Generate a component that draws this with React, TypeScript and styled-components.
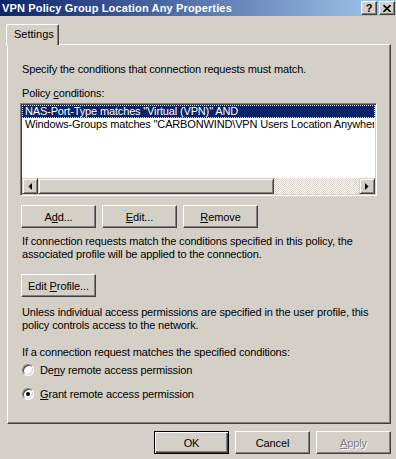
import React from "react";
import styled, { createGlobalStyle } from "styled-components";

const Global = createGlobalStyle`
  html, body { margin: 0; padding: 0; background: #d4d0c8; }
  body {
    font-family: "Liberation Sans", Arial, sans-serif;
    font-size: 11px;
    color: #000;
  }
`;

const Window = styled.div`
  width: 396px;
  height: 459px;
  background: #d4d0c8;
  display: flex;
  flex-direction: column;
  overflow: hidden;
`;

const TitleBar = styled.div`
  height: 16px;
  flex: none;
  display: flex;
  align-items: center;
  padding: 0 1px 0 2px;
  background: linear-gradient(to right, #0a246a, #a6caf0);
`;

const Title = styled.div`
  flex: 1;
  color: #fff;
  font-weight: bold;
  font-size: 11px;
  line-height: 16px;
  letter-spacing: 0.15px;
  white-space: nowrap;
`;

const CaptionButton = styled.div<{ $gap?: number }>`
  width: 16px;
  height: 14px;
  box-sizing: border-box;
  background: #d4d0c8;
  border: 1px solid;
  border-color: #fff #404040 #404040 #fff;
  box-shadow: inset -1px -1px #808080;
  display: flex;
  align-items: center;
  justify-content: center;
  margin-left: ${(p) => p.$gap ?? 0}px;
  font-weight: bold;
  font-size: 11px;
  line-height: 12px;
`;

const Body = styled.div`
  flex: 1;
  display: flex;
  flex-direction: column;
  padding: 8px 5px 0 7px;
`;

const TabStrip = styled.div`
  display: flex;
  height: 20px;
`;

const Tab = styled.div`
  position: relative;
  z-index: 1;
  margin-left: -1px;
  margin-bottom: -1px;
  width: 53px;
  height: 21px;
  box-sizing: border-box;
  background: #d4d0c8;
  border-top: 1px solid #fff;
  border-left: 1px solid #fff;
  border-right: 1px solid #404040;
  border-radius: 2px 2px 0 0;
  box-shadow: inset -1px 0 #808080;
  padding: 3px 0 0 7px;
  line-height: 13px;
`;

const Panel = styled.div`
  height: 380px;
  box-sizing: border-box;
  border: 1px solid;
  border-color: #fff #404040 #404040 #fff;
  box-shadow: inset -1px -1px #808080;
  padding: 0 13px 0 14px;
  display: flex;
  flex-direction: column;
`;

const Para = styled.div<{ $top: number }>`
  margin-top: ${(p) => p.$top}px;
  line-height: 13px;
  letter-spacing: -0.15px;
  white-space: nowrap;
`;

const U = styled.span`
  text-decoration: underline;
  text-underline-offset: 1px;
`;

const Label = styled.span`
  white-space: pre;
`;

const ListBox = styled.div`
  margin-top: 3px;
  margin-left: -2px;
  width: 357px;
  height: 93px;
  box-sizing: border-box;
  border: 1px solid;
  border-color: #808080 #fff #fff #808080;
  box-shadow: inset 1px 1px #404040, inset -1px -1px #d4d0c8;
  background: #fff;
  padding: 1px;
  display: flex;
  flex-direction: column;
  overflow: hidden;
`;

const Rows = styled.div`
  flex: 1;
  overflow: hidden;
`;

const Row = styled.div<{ $selected?: boolean }>`
  height: 13px;
  box-sizing: border-box;
  line-height: 11px;
  padding: 0 2px;
  white-space: nowrap;
  overflow: hidden;
  letter-spacing: -0.15px;
  border: 1px ${(p) => (p.$selected ? "dotted #f0e4a0" : "solid transparent")};
  background: ${(p) => (p.$selected ? "#0a246a" : "transparent")};
  color: ${(p) => (p.$selected ? "#fff" : "#000")};
`;

const ScrollBar = styled.div`
  height: 16px;
  flex: none;
  display: flex;
`;

const Raised = styled.div`
  box-sizing: border-box;
  background: #d4d0c8;
  border: 1px solid;
  border-color: #d4d0c8 #404040 #404040 #d4d0c8;
  box-shadow: inset 1px 1px #fff, inset -1px -1px #808080;
`;

const ScrollArrow = styled(Raised)`
  width: 16px;
  height: 16px;
  display: flex;
  align-items: center;
  justify-content: center;
`;

const Thumb = styled(Raised)`
  width: 236px;
  height: 16px;
`;

const Track = styled.div`
  flex: 1;
  background-color: #d4d0c8;
  background-image: conic-gradient(#fff 25%, #d4d0c8 0 50%, #fff 0 75%, #d4d0c8 0);
  background-size: 2px 2px;
`;

const ButtonRow = styled.div<{ $top: number }>`
  display: flex;
  gap: 6px;
  margin-top: ${(p) => p.$top}px;
  margin-left: -1px;
`;

const Button = styled.div<{ $default?: boolean; $disabled?: boolean }>`
  width: 75px;
  height: 23px;
  box-sizing: border-box;
  display: flex;
  align-items: center;
  justify-content: center;
  background: #d4d0c8;
  border: 1px solid;
  border-color: ${(p) => (p.$default ? "#000" : "#fff #404040 #404040 #fff")};
  box-shadow: ${(p) =>
    p.$default
      ? "inset 1px 1px #fff, inset -1px -1px #404040, inset -2px -2px #808080"
      : "inset -1px -1px #808080"};
  color: ${(p) => (p.$disabled ? "#808080" : "#000")};
  text-shadow: ${(p) => (p.$disabled ? "1px 1px #fff" : "none")};
  letter-spacing: -0.1px;
  white-space: nowrap;
`;

const Footer = styled.div`
  display: flex;
  justify-content: flex-end;
  gap: 6px;
  margin-top: 7px;
`;

const RadioRow = styled.div<{ $top: number }>`
  display: flex;
  align-items: center;
  height: 13px;
  margin-top: ${(p) => p.$top}px;
  letter-spacing: -0.15px;
  white-space: nowrap;
`;

const RadioCircle = styled.span<{ $checked?: boolean }>`
  width: 12px;
  height: 12px;
  box-sizing: border-box;
  border-radius: 50%;
  border: 1px solid;
  border-color: #808080 #fff #fff #808080;
  box-shadow: inset 1px 1px #404040, inset -1px -1px #d4d0c8;
  background: #fff;
  margin-right: 6px;
  display: flex;
  align-items: center;
  justify-content: center;
  &::after {
    content: "";
    width: 4px;
    height: 4px;
    border-radius: 50%;
    background: ${(p) => (p.$checked ? "#000" : "transparent")};
  }
`;

const Arrow = ({ dir }: { dir: "left" | "right" }) => (
  <svg width="4" height="7" viewBox="0 0 4 7">
    {dir === "left" ? (
      <polygon points="4,0 4,7 0.5,3.5" fill="#000" />
    ) : (
      <polygon points="0,0 0,7 3.5,3.5" fill="#000" />
    )}
  </svg>
);

const CloseGlyph = () => (
  <svg width="8" height="7" viewBox="0 0 8 7">
    <path d="M0.5 0 L7.5 7 M7.5 0 L0.5 7" stroke="#000" strokeWidth="1.6" />
  </svg>
);

export default function App() {
  return (
    <>
      <Global />
      <Window>
        <TitleBar>
          <Title>VPN Policy Group Location Any Properties</Title>
          <CaptionButton>?</CaptionButton>
          <CaptionButton $gap={2}>
            <CloseGlyph />
          </CaptionButton>
        </TitleBar>
        <Body>
          <TabStrip>
            <Tab>Settings</Tab>
          </TabStrip>
          <Panel>
            <Para $top={18}>Specify the conditions that connection requests must match.</Para>
            <Para $top={11}>
              Policy <U>c</U>onditions:
            </Para>
            <ListBox>
              <Rows>
                <Row $selected>NAS-Port-Type matches "Virtual (VPN)" AND</Row>
                <Row>Windows-Groups matches "CARBONWIND\VPN Users Location Anywhere"</Row>
              </Rows>
              <ScrollBar>
                <ScrollArrow>
                  <Arrow dir="left" />
                </ScrollArrow>
                <Thumb />
                <Track />
                <ScrollArrow>
                  <Arrow dir="right" />
                </ScrollArrow>
              </ScrollBar>
            </ListBox>
            <ButtonRow $top={9}>
              <Button>
                <Label>
                  A<U>d</U>d...
                </Label>
              </Button>
              <Button>
                <Label>
                  <U>E</U>dit...
                </Label>
              </Button>
              <Button>
                <Label>
                  <U>R</U>emove
                </Label>
              </Button>
            </ButtonRow>
            <Para $top={7}>
              If connection requests match the conditions specified in this policy, the
              <br />
              associated profile will be applied to the connection.
            </Para>
            <ButtonRow $top={13}>
              <Button>
                <Label>
                  Edit <U>P</U>rofile...
                </Label>
              </Button>
            </ButtonRow>
            <Para $top={9}>
              Unless individual access permissions are specified in the user profile, this
              <br />
              policy controls access to the network.
            </Para>
            <Para $top={14}>If a connection request matches the specified conditions:</Para>
            <RadioRow $top={4}>
              <RadioCircle />
              <Label>
                De<U>n</U>y remote access permission
              </Label>
            </RadioRow>
            <RadioRow $top={11}>
              <RadioCircle $checked />
              <Label>
                <U>G</U>rant remote access permission
              </Label>
            </RadioRow>
          </Panel>
          <Footer>
            <Button $default>OK</Button>
            <Button>Cancel</Button>
            <Button $disabled>
              <Label>
                <U>A</U>pply
              </Label>
            </Button>
          </Footer>
        </Body>
      </Window>
    </>
  );
}
